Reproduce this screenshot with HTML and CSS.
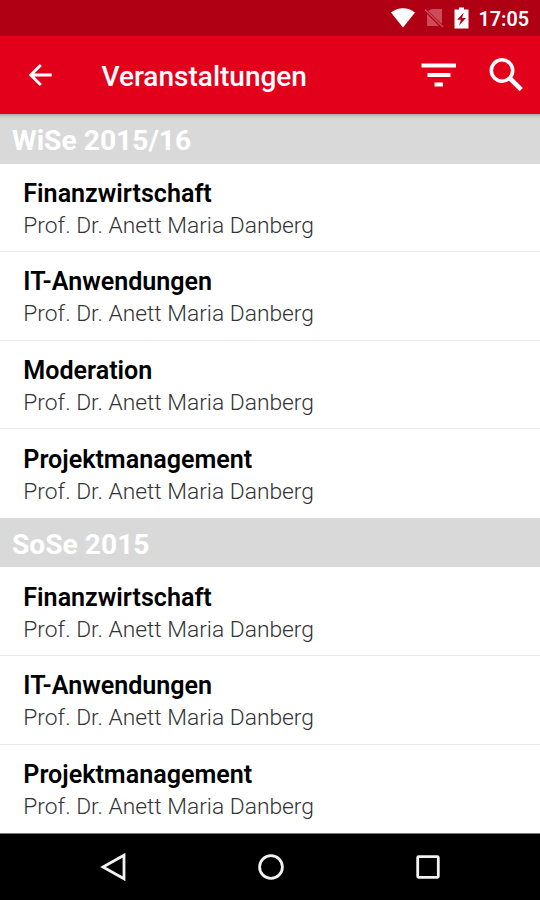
FILE: index.html
```html
<!DOCTYPE html>
<html lang="de">
<head>
  <meta charset="UTF-8">
  <title>Veranstaltungen</title>
  <link rel="stylesheet" href="styles.css">
</head>
<body>

<div class="statusbar">
  <svg class="wifi" width="26" height="20" viewBox="0 0 26 20"><path d="M1 4.5C8-1.2 18-1.2 25 4.5L13 19.5Z" fill="#fff"/></svg>
  <svg class="sim" width="20" height="22" viewBox="0 0 20 22">
    <path d="M8 2H18V17L4 3.8ZM3 7L15 19H3Z" fill="#cc4b58"/>
    <path d="M1 2.5L19 20" stroke="#cc4b58" stroke-width="1.6"/>
  </svg>
  <svg class="battery" width="15" height="22" viewBox="0 0 15 22">
    <path d="M5 0.5H10V2.5H14.5V21.5H0.5V2.5H5Z" fill="#fff"/>
    <path d="M9.8 5.5L3.2 12.8H7L5 18.5L12 11H8Z" fill="#b00014"/>
  </svg>
  <span class="clock">17:05</span>
</div>

<header class="toolbar">
  <svg class="back" width="24" height="24" viewBox="0 0 24 24"><path d="M23.7 12H2.5M12.8 2L2.8 12L12.8 22" fill="none" stroke="#fff" stroke-width="2.9"/></svg>
  <h1>Veranstaltungen</h1>
  <svg class="filter" width="36" height="24" viewBox="0 0 36 24"><path d="M0.5 0.5H35V4.5H0.5ZM6.5 10H29.5V14H6.5ZM13.5 19.5H22V23.5H13.5Z" fill="#fff"/></svg>
  <svg class="search" width="34" height="34" viewBox="0 0 34 34">
    <circle cx="13" cy="12.5" r="10.7" fill="none" stroke="#fff" stroke-width="3.6"/>
    <path d="M20.5 20L32.2 31.7" stroke="#fff" stroke-width="4.6"/>
  </svg>
</header>

<main>
  <h2 class="semester first">WiSe 2015/16</h2>
  <ul class="liste">
    <li><h3>Finanzwirtschaft</h3><p>Prof. Dr. Anett Maria Danberg</p></li>
    <li><h3>IT-Anwendungen</h3><p>Prof. Dr. Anett Maria Danberg</p></li>
    <li><h3>Moderation</h3><p>Prof. Dr. Anett Maria Danberg</p></li>
    <li><h3>Projektmanagement</h3><p>Prof. Dr. Anett Maria Danberg</p></li>
  </ul>
  <h2 class="semester">SoSe 2015</h2>
  <ul class="liste">
    <li><h3>Finanzwirtschaft</h3><p>Prof. Dr. Anett Maria Danberg</p></li>
    <li><h3>IT-Anwendungen</h3><p>Prof. Dr. Anett Maria Danberg</p></li>
    <li><h3>Projektmanagement</h3><p>Prof. Dr. Anett Maria Danberg</p></li>
  </ul>
</main>

<nav class="navbar">
  <svg width="28" height="28" viewBox="0 0 28 28"><path d="M24 2.2V25.8L3 14Z"/></svg>
  <svg width="28" height="28" viewBox="0 0 28 28"><circle cx="14" cy="14" r="11.4"/></svg>
  <svg width="28" height="28" viewBox="0 0 28 28"><rect x="3.7" y="3.7" width="20.6" height="20.6" rx="1"/></svg>
</nav>

</body>
</html>
```
FILE: styles.css
```css
* {
  box-sizing: border-box;
}

body {
  margin: 0;
  height: 900px;
  display: flex;
  flex-direction: column;
  overflow: hidden;
  background: #fff;
  color: #000;
  font-family: Roboto, "Liberation Sans", sans-serif;
}

h1, h2, h3, p, ul {
  margin: 0;
  padding: 0;
}

.statusbar {
  height: 36px;
  flex: none;
  display: flex;
  align-items: center;
  justify-content: flex-end;
  padding-right: 11px;
  background: #b00014;
  color: #fff;
}

.sim {
  margin-left: 8px;
}

.battery {
  margin-left: 10px;
}

.clock {
  margin-left: 9px;
  padding-top: 2px;
  font-size: 19.8px;
  font-weight: 600;
}

.toolbar {
  height: 78px;
  flex: none;
  display: flex;
  align-items: center;
  padding: 0 17px 0 28px;
  background: #e3001b;
  color: #fff;
}

.toolbar h1 {
  flex: 1;
  margin-left: 49.5px;
  padding-top: 3px;
  font-size: 28px;
  font-weight: 500;
}

.search {
  margin-left: 32px;
}

.semester {
  height: 49.5px;
  padding-left: 12px;
  background: #d9d9d9;
  color: #fff;
  font-size: 28.2px;
  font-weight: 700;
  line-height: 54px;
}

.semester.first {
  background: linear-gradient(#a9a9ab, #cfcfd0 3px, #d9d9d9 6px);
}

.liste {
  list-style: none;
}

.liste li {
  height: 88.6px;
  padding: 14.4px 23.3px 0;
  border-bottom: 1px solid #e8e8e8;
}

.liste li:last-child {
  border-bottom: none;
}

.liste h3 {
  font-size: 25.1px;
  font-weight: 600;
  line-height: 32px;
}

.liste p {
  color: #333;
  font-size: 22.8px;
  font-weight: 300;
  line-height: 31px;
}

.navbar {
  flex: 1;
  display: flex;
  align-items: center;
  justify-content: center;
  gap: 129px;
  padding-left: 1px;
  border-top: 1px solid #777;
  background: #000;
}

.navbar svg {
  fill: none;
  stroke: #f2f2f2;
  stroke-width: 2.8;
}
```
